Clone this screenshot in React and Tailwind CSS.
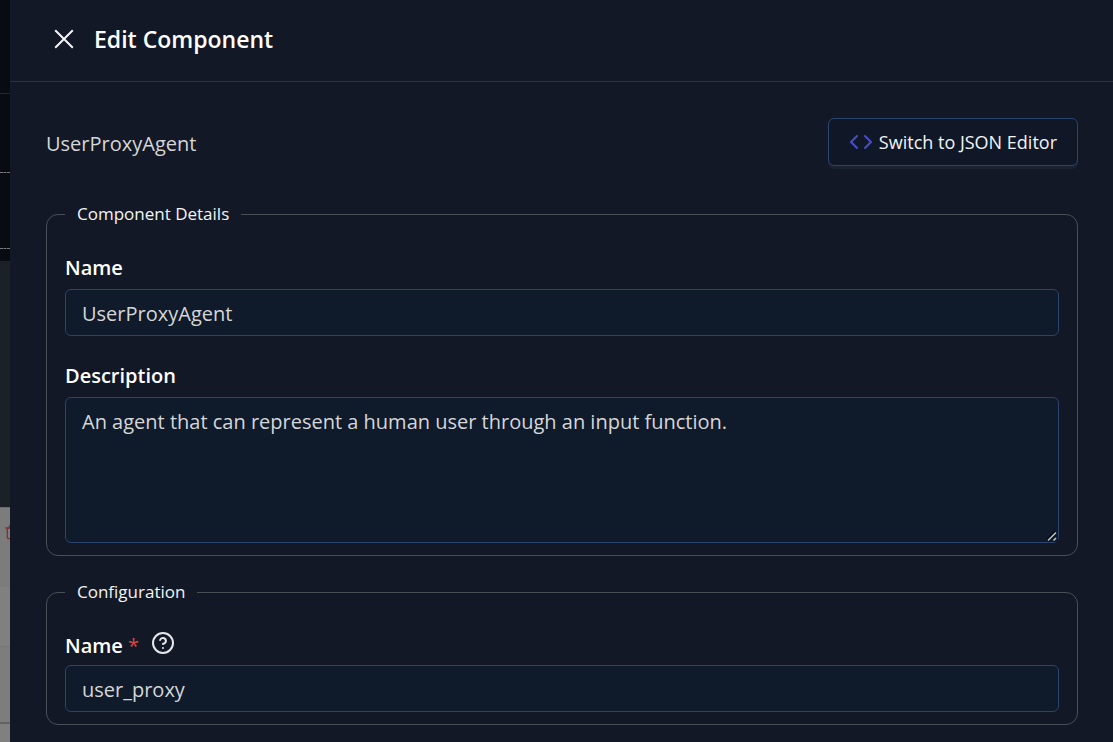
import React, { useState } from 'react';
import { Code, CircleQuestionMark, Trash2 } from 'lucide-react';

const inputClass =
    'block w-full rounded-md border border-[#2a4470] bg-[#0f1a2b] px-4 text-xl leading-[30px] text-[#d5d6d8] focus:outline-none focus:border-indigo-500';

const labelClass = 'block text-xl leading-[30px] font-semibold text-white';

const CloseIcon = () => (
    <svg width="20" height="20" viewBox="0 0 20 20" fill="none" stroke="currentColor" strokeWidth="2" aria-hidden="true">
        <path d="M1.2 1.2 18.8 18.8M18.8 1.2 1.2 18.8" />
    </svg>
);

const ResizeGrip = () => (
    <svg
        width="12"
        height="12"
        viewBox="0 0 12 12"
        fill="none"
        className="pointer-events-none absolute right-px bottom-px bg-[#0f1a2b]"
        aria-hidden="true"
    >
        <path d="M1.5 10.5 10 2" stroke="#05080d" strokeWidth="3.5" />
        <path d="M2 10.5 10 2.5" stroke="#c4c6c9" strokeWidth="1.6" />
        <path d="M7.5 10.5 10 8" stroke="#c4c6c9" strokeWidth="1.6" />
    </svg>
);

// Strip of the dimmed builder canvas that stays visible next to the drawer
const Backdrop = () => (
    <div className="flex w-[10px] shrink-0 flex-col overflow-hidden bg-[#808080]" aria-hidden="true">
        <div className="h-[94px] shrink-0 border-b border-[#24272b] bg-[#080b11]" />
        <div className="h-[79px] shrink-0 border-b border-dashed border-[#77797b] bg-[#080b11]" />
        <div className="h-[76px] shrink-0 border-b border-dashed border-[#77797b] bg-[#080b11]" />
        <div className="h-3 shrink-0 bg-[#080b11]" />
        <div className="h-[246px] shrink-0 bg-[#1c2127]" />
        <div className="h-20 shrink-0 border-t border-[#6c6c6c] bg-[#7c7c7c] pt-4 pl-1">
            <Trash2 size={16} className="max-w-none text-[#8c2c2c]" />
        </div>
        <div className="h-[60px] shrink-0 border-b border-[#787878] bg-[#808080]" />
        <div className="h-[77px] shrink-0 border-b-2 border-dashed border-[#636363] bg-[#7d7d7d]" />
    </div>
);

const Section = ({ title, children }) => (
    <fieldset className="min-w-0 rounded-xl border border-[#4a4e57] px-[18px] pb-3">
        <legend className="px-3 text-[17px] leading-7 text-[#f3f4f6]">{title}</legend>
        <div className="pt-[25px]">{children}</div>
    </fieldset>
);

const App = () => {
    const [name, setName] = useState('UserProxyAgent');
    const [description, setDescription] = useState(
        'An agent that can represent a human user through an input function.'
    );
    const [configName, setConfigName] = useState('user_proxy');

    return (
        <div className="flex min-h-screen bg-[#121825] font-['Open_Sans','Segoe_UI',sans-serif] scheme-dark">
            <Backdrop />
            <div className="min-w-0 flex-1">
                <header className="flex h-[82px] items-center gap-5 border-b border-[#22335a] px-11 pb-[3px]">
                    <button type="button" aria-label="Close" className="text-[#f3f4f6]">
                        <CloseIcon />
                    </button>
                    <h1 className="text-[23px] leading-8 font-semibold text-white">Edit Component</h1>
                </header>

                <main className="pt-9 pr-[35px] pb-4 pl-9">
                    <div className="mb-[34px] flex items-center justify-between">
                        <h2 className="pt-[3px] text-xl leading-[30px] text-[#d5d6d8]">UserProxyAgent</h2>
                        <button
                            type="button"
                            className="flex h-12 items-center gap-1.5 rounded-md border border-[#2a4470] bg-[#101828] px-5 text-lg leading-7 text-[#f3f4f6] shadow-[0_3px_0_#1a2130]"
                        >
                            <Code size={24} className="text-[#4b4ccb]" />
                            Switch to JSON Editor
                        </button>
                    </div>

                    <div className="flex flex-col gap-[22px]">
                        <Section title="Component Details">
                            <label htmlFor="name" className={`${labelClass} mb-1.5`}>
                                Name
                            </label>
                            <input
                                id="name"
                                type="text"
                                value={name}
                                onChange={(e) => setName(e.target.value)}
                                className={`${inputClass} h-[47px] pt-0.5`}
                            />
                            <label htmlFor="description" className={`${labelClass} mt-[25px] mb-1.5`}>
                                Description
                            </label>
                            <div className="relative">
                                <textarea
                                    id="description"
                                    value={description}
                                    onChange={(e) => setDescription(e.target.value)}
                                    className={`${inputClass} h-[146px] resize-y py-[9px]`}
                                />
                                <ResizeGrip />
                            </div>
                        </Section>

                        <Section title="Configuration">
                            <div className="mb-1 flex h-[30px] items-start">
                                <label htmlFor="config-name" className={labelClass}>
                                    Name <span className="font-normal text-[#d84a46]">*</span>
                                </label>
                                <button type="button" aria-label="Help" className="ml-3 text-[#e5e7eb]">
                                    <CircleQuestionMark size={24} />
                                </button>
                            </div>
                            <input
                                id="config-name"
                                type="text"
                                required
                                value={configName}
                                onChange={(e) => setConfigName(e.target.value)}
                                className={`${inputClass} h-[47px] pt-0.5`}
                            />
                        </Section>
                    </div>
                </main>
            </div>
        </div>
    );
};

export default App;
